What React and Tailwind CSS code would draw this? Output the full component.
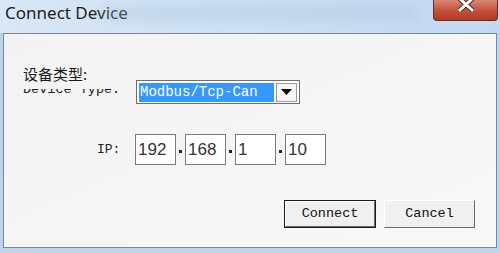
import React from "react";

const mono = { fontFamily: '"Liberation Mono", "DejaVu Sans Mono", monospace' };

function IpBox({ value }) {
  return (
    <div className="w-[41px] h-[31px] border border-[#7a7a7a] bg-white flex items-center pl-[2px] text-[17px] text-[#333] leading-none" style={{ fontFamily: '"Liberation Sans", Arial, sans-serif' }}>
      {value}
    </div>
  );
}

function Dot() {
  return (
    <div className="w-[9px] h-[31px] flex items-center justify-center">
      <div className="w-[3px] h-[3px] bg-[#222] mt-[3px]" />
    </div>
  );
}

export default function App() {
  return (
    <div className="w-[500px] h-[253px] bg-[#bdd4ee] flex flex-col overflow-hidden" style={{ fontFamily: '"Noto Sans", sans-serif' }}>
      {/* title bar */}
      <div className="h-[33px] flex items-start justify-between bg-gradient-to-r from-[#d9e7f6] via-[#cde0f4] to-[#c2d9f1] relative">
        <div className="pl-[5px] pt-[1px] text-[17px] leading-[23px] text-[#1c1c1c]">Connect Device</div>
        <div className="absolute left-[100px] top-[6px] w-[320px] h-[14px] bg-[#a9c2dc] opacity-40 blur-[6px] rounded-full" />
        <div className="relative mr-[2px] w-[65px] h-[21px] border border-t-0 border-[#6e2a22] rounded-b-[4px] bg-gradient-to-b from-[#d98878] via-[#c6533f] to-[#b03a25] flex items-start justify-center">
          <svg width="16" height="14" viewBox="0 0 16 14" className="-mt-[2px]">
            <path d="M2 1 L14 12 M14 1 L2 12" stroke="#5a2018" strokeWidth="5" strokeLinecap="square" />
            <path d="M2 1 L14 12 M14 1 L2 12" stroke="#ffffff" strokeWidth="3" strokeLinecap="square" />
          </svg>
        </div>
      </div>

      {/* client area */}
      <div className="ml-[3px] mr-[3px] h-[215px] border border-[#7f8792] bg-gradient-to-br from-[#f3f3f3] to-[#f8f8f8] flex flex-col">
        {/* row 1 */}
        <div className="flex items-start mt-[31px] pl-[19px]">
          <div className="w-[113px] flex flex-col">
            <div className="text-[15px] leading-[18px] text-[#1a1a1a]" style={{ fontFamily: '"Noto Sans CJK SC", "Noto Sans", sans-serif' }}>设备类型:</div>
            <div className="h-[8px] overflow-hidden mt-[6px]">
              <div className="text-[13.5px] leading-[13px] -mt-[6px] text-[#222]" style={mono}>Device Type:</div>
            </div>
          </div>
          <div className="mt-[15px] w-[164px] h-[24px] border border-[#6f6f6f] bg-white flex items-center p-[2px] gap-[2px]">
            <div className="w-[136px] h-[19px] bg-[#3399ff] text-white text-[14px] leading-[19px] pl-[1px]" style={mono}>Modbus/Tcp-Can</div>
            <div className="w-[21px] h-[19px] border border-[#9a9a9a] bg-[#f6f6f6] flex items-center justify-center">
              <svg width="11" height="6" viewBox="0 0 11 6"><path d="M0 0 H11 L5.5 6 Z" fill="#000" /></svg>
            </div>
          </div>
        </div>

        {/* row 2 */}
        <div className="flex items-center mt-[30px] pl-[93px]">
          <div className="w-[38px] text-[13px] text-[#222]" style={mono}>IP:</div>
          <IpBox value="192" />
          <Dot />
          <IpBox value="168" />
          <Dot />
          <IpBox value="1" />
          <Dot />
          <IpBox value="10" />
        </div>

        {/* row 3 */}
        <div className="flex justify-end gap-[8px] mt-[35px] pr-[21px]">
          <div className="w-[92px] h-[28px] border border-[#1a1a1a] bg-[#f0f0f0] flex">
            <div className="flex-1 border border-t-white border-l-white border-r-[#6a6a6a] border-b-[#6a6a6a] flex items-center justify-center text-[13.5px] text-[#111]" style={mono}>Connect</div>
          </div>
          <div className="w-[91px] h-[28px] border border-t-[#ffffff] border-l-[#ffffff] border-r-[#6a6a6a] border-b-[#6a6a6a] bg-[#f0f0f0] flex items-center justify-center text-[13.5px] text-[#111]" style={mono}>Cancel</div>
        </div>
      </div>
    </div>
  );
}
